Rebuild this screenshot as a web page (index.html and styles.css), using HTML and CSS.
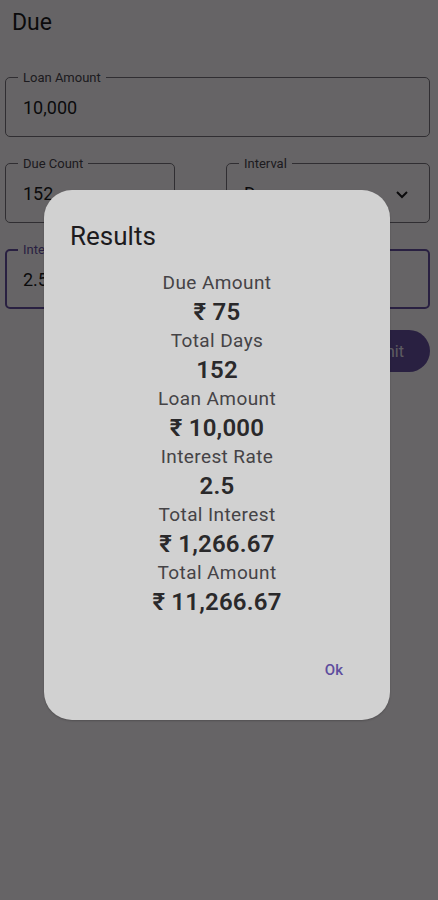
FILE: index.html
```html
<!DOCTYPE html>
<html>
<head>
<meta charset="utf-8">
<link rel="stylesheet" href="styles.css">
</head>
<body>
<div class="page">
  <h1 class="title">Due</h1>
  <div class="field">
    <span class="label">Loan Amount</span>
    <span class="value">10,000</span>
  </div>
  <div class="row">
    <div class="field count">
      <span class="label">Due Count</span>
      <span class="value">152</span>
    </div>
    <div class="field interval">
      <span class="label">Interval</span>
      <span class="value">Days</span>
      <svg class="chev" width="24" height="24" viewBox="0 0 24 24"><path d="M7 10l5 5 5-5" fill="none" stroke="#1c1b1f" stroke-width="2"/></svg>
    </div>
  </div>
  <div class="field focused">
    <span class="label">Interest Rate</span>
    <span class="value">2.5</span>
  </div>
  <div class="actions"><button class="submit">Submit</button></div>
</div>
<div class="scrim"></div>
<div class="dialog">
  <h2 class="d-title">Results</h2>
  <div class="list">
    <div class="k">Due Amount</div><div class="v">₹ 75</div>
    <div class="k">Total Days</div><div class="v">152</div>
    <div class="k">Loan Amount</div><div class="v">₹ 10,000</div>
    <div class="k">Interest Rate</div><div class="v">2.5</div>
    <div class="k">Total Interest</div><div class="v">₹ 1,266.67</div>
    <div class="k">Total Amount</div><div class="v">₹ 11,266.67</div>
  </div>
  <div class="d-actions"><span class="ok">Ok</span></div>
</div>
</body>
</html>
```
FILE: styles.css
```css
html, body { margin: 0; padding: 0; }
body {
  width: 438px; height: 900px; overflow: hidden;
  background: #fffbfe;
  font-family: Roboto, "Noto Sans", sans-serif;
  color: #1c1b1f;
  position: relative;
}
.page { padding: 0 8px 0 5px; display: flex; flex-direction: column; }
.title { font-size: 23px; font-weight: 400; margin: 8px 0 0 7px; line-height: 30px; }
.field {
  position: relative;
  border: 1px solid #79747e;
  border-radius: 5px;
  height: 58px;
  display: flex; align-items: center;
  padding: 0 17px;
  margin-top: 26px;
}
.title + .field { margin-top: 39px; }
.label {
  position: absolute; left: 12px; top: -8px;
  font-size: 13px; line-height: 15px;
  background: #fffbfe; padding: 0 5px;
  color: #49454f;
}
.value { font-size: 18px; color: #1c1b1f; }
.row { display: flex; justify-content: space-between; }
.row .field { margin-top: 26px; }
.count { width: 134px; }
.interval { width: 168px; }
.chev { position: absolute; right: 15px; top: 18px; }
.focused { border: 2px solid #6750a4; height: 56px; padding: 0 16px; }
.focused .label { left: 11px; top: -9px; color: #6750a4; }
.actions { display: flex; justify-content: flex-end; margin-top: 21px; }
.submit {
  background: #6750a4; color: #e8e4f0; border: none; border-radius: 21px;
  height: 42px; padding: 0 26px; font-family: Roboto, sans-serif; font-size: 16px;
}
.scrim { position: absolute; inset: 0; background: rgba(0,0,0,0.6); }
.dialog {
  position: absolute; left: 44px; top: 190px; width: 346px; height: 530px;
  background: #d1d1d1; border-radius: 28px;
  box-shadow: 0 1px 2px rgba(0,0,0,0.2);
  box-sizing: border-box; padding: 31px 26px 0;
  display: flex; flex-direction: column;
}
.d-title { margin: 0; font-size: 26px; font-weight: 400; line-height: 30px; color: #1d1b1e; }
.list { display: flex; flex-direction: column; align-items: center; margin-top: 17px; }
.k { font-size: 19px; letter-spacing: 0.4px; line-height: 29px; color: #454346; height: 29px; }
.v { font-size: 24px; line-height: 31px; height: 29px; font-weight: 600; color: #2a292b; letter-spacing: 0.2px; }
.d-actions { display: flex; justify-content: flex-end; margin-top: 44px; padding-right: 21px; }
.ok { font-size: 15px; color: #5d4d9e; font-weight: 500; line-height: 20px; }
```
